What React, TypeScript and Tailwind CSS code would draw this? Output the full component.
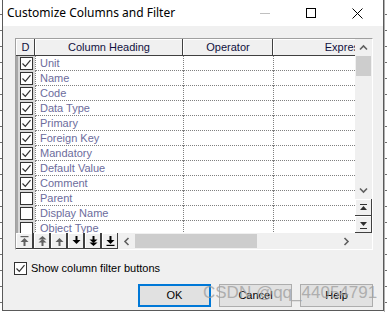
import React from "react";

const rows = [
  { name: "Unit", on: true },
  { name: "Name", on: true },
  { name: "Code", on: true },
  { name: "Data Type", on: true },
  { name: "Primary", on: true },
  { name: "Foreign Key", on: true },
  { name: "Mandatory", on: true },
  { name: "Default Value", on: true },
  { name: "Comment", on: true },
  { name: "Parent", on: false },
  { name: "Display Name", on: false },
  { name: "Object Type", on: false },
];

const raised = "bg-[#f0f0f0] shadow-[inset_-1px_-1px_#404040,inset_1px_1px_#ffffff]";

function Check({ on }: { on: boolean }) {
  return (
    <div className="w-[13px] h-[13px] border border-[#333333] bg-white flex items-center justify-center shrink-0">
      {on && (
        <svg width="11" height="11" viewBox="0 0 11 11">
          <path d="M1.5 5.5 L4.3 8.3 L9.5 2.2" fill="none" stroke="#333333" strokeWidth="1.2" />
        </svg>
      )}
    </div>
  );
}

function Chevron({ dir }: { dir: "up" | "down" | "left" | "right" }) {
  const rot = { up: 0, down: 180, left: -90, right: 90 }[dir];
  return (
    <svg width="9" height="9" viewBox="0 0 9 9" style={{ transform: `rotate(${rot}deg)` }}>
      <path d="M1 6.5 L4.5 3 L8 6.5" fill="none" stroke="#606060" strokeWidth="1.6" />
    </svg>
  );
}

// toolbar arrow icons (move top / page up / up / down / page down / bottom)
function MoveIcon({ kind, color }: { kind: number; color: string }) {
  const shapes: Record<number, React.ReactNode> = {
    0: (
      <>
        <rect x="0.5" y="0" width="8" height="1.2" />
        <polygon points="4.5,2 8.5,6 0.5,6" />
        <rect x="3.5" y="6" width="2" height="4" />
      </>
    ),
    1: (
      <>
        <polygon points="4.5,0 8.5,3.5 0.5,3.5" />
        <polygon points="4.5,3 8.5,6.5 0.5,6.5" />
        <rect x="3.5" y="6" width="2" height="4" />
      </>
    ),
    2: (
      <>
        <polygon points="4.5,2 8.5,6 0.5,6" />
        <rect x="3.5" y="6" width="2" height="4" />
      </>
    ),
    3: (
      <>
        <rect x="3.5" y="0" width="2" height="4" />
        <polygon points="4.5,8 8.5,4 0.5,4" />
      </>
    ),
    4: (
      <>
        <rect x="3.5" y="0" width="2" height="4" />
        <polygon points="4.5,7 8.5,3.5 0.5,3.5" />
        <polygon points="4.5,10 8.5,6.5 0.5,6.5" />
      </>
    ),
    5: (
      <>
        <rect x="3.5" y="0" width="2" height="4" />
        <polygon points="4.5,8 8.5,4 0.5,4" />
        <rect x="0.5" y="8.8" width="8" height="1.2" />
      </>
    ),
  };
  return (
    <svg width="9" height="10" viewBox="0 0 9 10" fill={color}>
      {shapes[kind]}
    </svg>
  );
}

function Grid() {
  return (
    <div className="w-[358px] h-[212px] border-t border-l border-[#a0a0a0] border-r border-b border-r-white border-b-white flex flex-col bg-white">
      <div className="flex h-[194px]">
        {/* data area */}
        <div className="w-[339px] overflow-hidden">
          <div className="flex h-[17px] w-[420px] text-[11px] text-[#101040]">
            <div className={`w-[19px] h-full flex items-center justify-center ${raised}`}>D</div>
            <div className={`w-[148px] h-full flex items-center justify-center ${raised}`}>Column Heading</div>
            <div className={`w-[90px] h-full flex items-center justify-center ${raised}`}>Operator</div>
            <div className={`w-[158px] h-full flex items-center justify-center ${raised}`}>Expression</div>
          </div>
          {rows.map((r) => (
            <div key={r.name} className="flex h-[15px] w-[420px] text-[11px] text-[#6c6c9c]">
              <div className="w-[19px] h-full bg-[#d8d8d8] flex items-center justify-center border-l-2 border-[#a8a8a8]">
                <Check on={r.on} />
              </div>
              <div className="w-[148px] h-full border-l border-b border-dotted border-[#808080] pl-[4px] flex items-center leading-none">
                {r.name}
              </div>
              <div className="w-[90px] h-full border-l border-b border-dotted border-[#808080]" />
              <div className="w-[160px] h-full border-l border-b border-dotted border-[#808080]" />
            </div>
          ))}
        </div>
        {/* vertical scrollbar */}
        <div className="w-[17px] flex flex-col bg-[#f0f0f0]">
          <div className="h-[17px] flex items-center justify-center">
            <Chevron dir="up" />
          </div>
          <div className="h-[20px] mx-[1px] bg-[#cdcdcd]" />
          <div className="h-[106px]" />
          <div className="h-[17px] flex items-center justify-center">
            <Chevron dir="down" />
          </div>
          <div className={`h-[17px] flex items-center justify-center ${raised}`}>
            <svg width="9" height="8" viewBox="0 0 9 8" fill="#303030">
              <rect x="1" y="0" width="7" height="1" />
              <polygon points="4.5,2 8,6 1,6" />
            </svg>
          </div>
          <div className={`h-[17px] flex items-center justify-center ${raised}`}>
            <svg width="9" height="8" viewBox="0 0 9 8" fill="#303030">
              <polygon points="4.5,5 8,1 1,1" />
              <rect x="1" y="7" width="7" height="1" />
            </svg>
          </div>
        </div>
      </div>
      <div className="flex h-[16px] bg-[#f0f0f0]">
        {[0, 1, 2, 3, 4, 5].map((k) => (
          <div key={k} className={`w-[17px] h-full flex items-center justify-center ${raised} border-l border-[#404040] first:border-l-0`}>
            <MoveIcon kind={k} color={k < 3 ? "#606060" : "#000000"} />
          </div>
        ))}
        <div className="w-[17px] h-full flex items-center justify-center">
          <Chevron dir="left" />
        </div>
        <div className="w-[122px] h-[14px] my-[1px] bg-[#cdcdcd]" />
        <div className="w-[81px]" />
        <div className="w-[17px] h-full flex items-center justify-center">
          <Chevron dir="right" />
        </div>
        <div className="w-[17px] h-full" />
      </div>
    </div>
  );
}

export default function App() {
  const ticks =
    "bg-[repeating-linear-gradient(to_bottom,transparent_0,transparent_14px,#707070_14px,#707070_15px,transparent_15px,transparent_16px)]";
  return (
    <div className="w-[387px] h-[312px] bg-white flex overflow-hidden font-['Liberation_Sans',Arial,sans-serif]">
      <div className={`w-[2px] h-full ${ticks}`} />
      <div className="w-[382px] h-[311px] border-l border-r border-b border-[#5a5a5a] bg-[#f0f0f0] flex flex-col relative">
        {/* title bar */}
        <div className="h-[26px] bg-white flex items-center shrink-0">
          <span className="pl-[4px] text-[12px] text-black font-['Noto_Sans',sans-serif] flex-1">
            Customize Columns and Filter
          </span>
          <div className="w-[46px] flex justify-center">
            <div className="w-[10px] h-[1px] bg-[#c0c0c0]" />
          </div>
          <div className="w-[46px] flex justify-center">
            <div className="w-[10px] h-[10px] border border-black" />
          </div>
          <div className="w-[46px] flex justify-center">
            <svg width="11" height="11" viewBox="0 0 11 11">
              <path d="M0.5 0.5 L10.5 10.5 M10.5 0.5 L0.5 10.5" stroke="black" strokeWidth="1" />
            </svg>
          </div>
          <div className="w-[3px]" />
        </div>

        {/* body */}
        <div className="pl-[11px] pt-[12px]">
          <div className="pl-[1px]">
            <Grid />
          </div>
          <label className="flex items-center gap-[4px] mt-[11px] h-[14px]">
            <Check on={true} />
            <span className="text-[11px] text-black">Show column filter buttons</span>
          </label>
          <div className="flex justify-end gap-[8px] mt-[9px] pr-[10px] text-[11px] text-black">
            <button className="w-[73px] h-[23px] border-2 border-[#0078d7] bg-[#e1e1e1]">OK</button>
            <button className="w-[73px] h-[23px] border border-[#adadad] bg-[#e1e1e1]">Cancel</button>
            <button className="w-[73px] h-[23px] border border-[#adadad] bg-[#e1e1e1]">Help</button>
          </div>
        </div>

        {/* watermark */}
        <div className="absolute left-[200px] top-[284px] whitespace-nowrap text-[17px] leading-none text-[#a0a0a0]/80 pointer-events-none">
          CSDN @qq_44054791
        </div>
      </div>
      <div className={`flex-1 h-full border-l border-[#b0b0b0] ${ticks}`} />
    </div>
  );
}
